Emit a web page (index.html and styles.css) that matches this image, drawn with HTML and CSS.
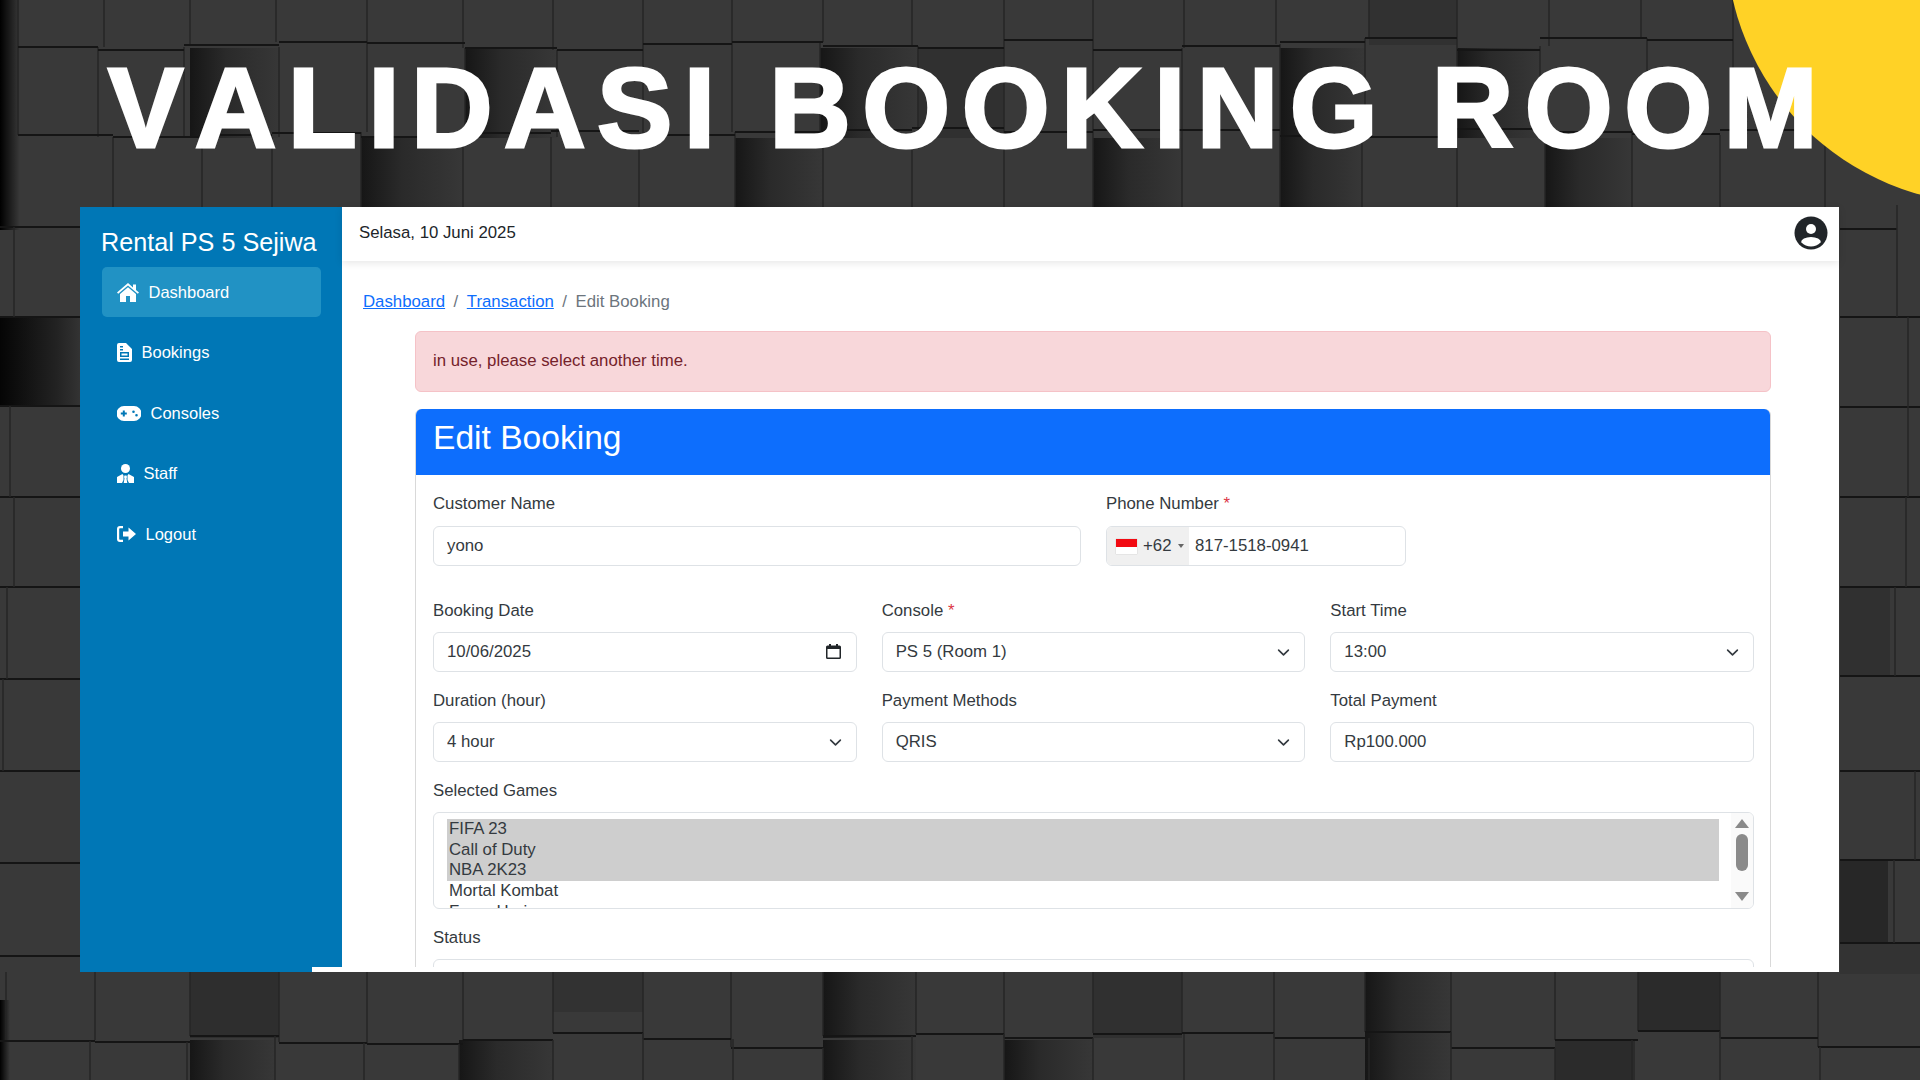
FILE: index.html
```html
<!DOCTYPE html>
<html lang="id">
<head>
  <meta charset="UTF-8">
  <meta name="viewport" content="width=device-width, initial-scale=1.0">
  <title>Validasi Booking Room</title>
  <link rel="stylesheet" href="styles.css">
</head>
<body>
  <!-- background cubes -->
  <svg class="cubes" viewBox="0 0 1920 1080" aria-hidden="true">
    <defs>
      <linearGradient id="shade">
        <stop offset="0" stop-color="#161616"/>
        <stop offset=".4" stop-color="#2a2a2a"/>
        <stop offset="1" stop-color="#373737"/>
      </linearGradient>
      <linearGradient id="edge">
        <stop offset="0" stop-color="#000"/>
        <stop offset="1" stop-color="#000" stop-opacity="0"/>
      </linearGradient>
      <linearGradient id="left-drop">
        <stop offset="0" stop-color="#050505"/>
        <stop offset=".7" stop-color="#222"/>
        <stop offset="1" stop-color="#333"/>
      </linearGradient>
    </defs>
    <rect width="1920" height="1080" fill="#393939"/>

    <!-- shadowed faces, top rows -->
    <rect x="190" y="48" width="90" height="90" fill="url(#shade)"/>
    <rect x="465" y="48" width="92" height="90" fill="url(#shade)"/>
    <rect x="820" y="48" width="98" height="90" fill="url(#shade)"/>
    <rect x="918" y="48" width="86" height="90" fill="#303030"/>
    <rect x="1280" y="48" width="85" height="90" fill="url(#shade)"/>
    <rect x="1457" y="48" width="83" height="90" fill="url(#shade)"/>
    <rect x="1369" y="0" width="88" height="45" fill="#313131"/>
    <rect x="361" y="138" width="102" height="70" fill="url(#shade)"/>
    <rect x="735" y="138" width="88" height="70" fill="url(#shade)"/>
    <rect x="1093" y="138" width="89" height="70" fill="url(#shade)"/>
    <rect x="1280" y="138" width="82" height="70" fill="url(#shade)"/>
    <rect x="1545" y="138" width="87" height="70" fill="url(#shade)"/>

    <!-- shadowed faces, side strips -->
    <rect x="0" y="317" width="80" height="90" fill="url(#left-drop)"/>
    <rect x="0" y="0" width="20" height="230" fill="url(#edge)"/>
    <rect x="0" y="1000" width="10" height="80" fill="url(#edge)"/>
    <rect x="1840" y="587" width="50" height="90" fill="#303030"/>
    <rect x="1840" y="860" width="48" height="84" fill="#272727"/>
    <rect x="1840" y="944" width="80" height="30" fill="#333"/>

    <!-- shadowed faces, bottom rows -->
    <rect x="190" y="972" width="89" height="66" fill="#2e2e2e"/>
    <rect x="553" y="972" width="90" height="40" fill="#323232"/>
    <rect x="823" y="972" width="93" height="66" fill="url(#shade)"/>
    <rect x="1093" y="972" width="89" height="66" fill="#303030"/>
    <rect x="1365" y="972" width="86" height="66" fill="url(#shade)"/>
    <rect x="1638" y="972" width="82" height="60" fill="#2b2b2b"/>
    <rect x="190" y="1040" width="85" height="40" fill="url(#shade)"/>
    <rect x="459" y="1040" width="94" height="40" fill="url(#shade)"/>
    <rect x="823" y="1040" width="93" height="40" fill="url(#shade)"/>
    <rect x="1004" y="1040" width="89" height="40" fill="url(#shade)"/>
    <rect x="1365" y="1032" width="86" height="48" fill="url(#shade)"/>
    <rect x="1555" y="1040" width="80" height="40" fill="#2b2b2b"/>

    <!-- seams between cubes, vertical ones are faint -->
    <path class="seam-v" d="M18 0V47M104 0V47M190 0V45M276 0V42M367 0V42M463 0V48M553 0V50M643 0V48M732 0V44M823 0V42M912 0V46M1004 0V40M1093 0V50M1184 0V48M1276 0V44M1369 0V38M1457 0V50M1549 0V46M1641 0V38M1733 0V40"/>
    <path class="seam-v" d="M18 47V135M98 47V137M184 47V137M279 47V137M367 42V132M465 48V137M557 50V137M643 48V135M732 44V132M820 42V132M918 46V137M1004 40V128M1093 50V137M1182 48V130M1280 44V133M1365 38V130M1457 50V137M1540 46V135M1647 38V128M1733 40V135"/>
    <path class="seam-v" d="M113 137V207M202 137V207M272 137V207M361 132V207M463 137V207M551 137V207M639 135V207M735 132V207M823 132V207M912 137V207M1004 128V207M1093 137V207M1182 130V207M1280 133V207M1362 130V207M1457 137V207M1545 135V207M1632 128V207M1720 135V207M1825 137V207"/>
    <path class="seam" d="M18 47H98M98 50H184M184 45H279M279 42H367M367 43H465M465 48H557M557 50H643M643 44H732M732 42H823M823 46H918M918 48H1004M1004 40H1093M1093 50H1182M1182 46H1280M1280 42H1365M1365 38H1457M1457 50H1540M1540 38H1647M1647 40H1733"/>
    <path class="seam" d="M18 135H113M113 137H202M202 135H272M272 133H361M361 137H463M463 133H551M551 131H639M639 135H735M735 132H823M823 130H912M912 128H1004M1004 132H1093M1093 130H1182M1182 130H1280M1280 136H1362M1362 137H1457M1457 129H1545M1545 132H1632M1632 134H1720M1720 130H1825"/>

    <path class="seam" d="M0 227H80M0 317H80M0 406H80M0 497H80M0 587H80M0 679H80M0 771H80M0 863H80M0 956H80"/>
    <path class="seam-v" d="M14 227V317M10 406V497M14 497V587M7 587V679M3 679V771"/>
    <path class="seam" d="M1840 229H1897M1840 317H1920M1840 407H1920M1840 497H1920M1840 587H1920M1840 676H1920M1840 771H1920M1840 860H1920M1840 943H1920"/>
    <path class="seam-v" d="M1897 205V317M1908 317V407M1908 407V497M1906 497V587M1895 587V676M1915 771V860M1894 860V943"/>

    <path class="seam-v" d="M6 972V1040M95 972V1040M190 972V1036M279 972V1042M367 972V1043M463 972V1040M553 972V1033M643 972V1039M731 972V1047M823 972V1036M916 972V1034M1004 972V1038M1093 972V1033M1182 972V1033M1274 972V1038M1365 972V1032M1451 972V1047M1555 972V1040M1638 972V1031M1720 972V1038M1818 972V1047"/>
    <path class="seam" d="M0 1041H95M95 1042H190M190 1036H279M279 1043H367M367 1044H463M463 1040H553M553 1033H643M643 1039H731M731 1048H823M823 1036H916M916 1034H1004M1004 1038H1093M1093 1034H1182M1182 1033H1274M1274 1038H1365M1365 1032H1451M1451 1048H1555M1555 1040H1638M1638 1031H1720M1720 1038H1818M1818 1047H1920"/>
    <path class="seam-v" d="M90 1041V1080M187 1042V1080M275 1036V1080M364 1043V1080M459 1044V1080M553 1040V1080M643 1033V1080M733 1039V1080M823 1048V1080M912 1036V1080M1004 1034V1080M1093 1038V1080M1184 1034V1080M1274 1033V1080M1369 1038V1080M1451 1032V1080M1555 1048V1080M1632 1040V1080M1720 1031V1080M1820 1047V1080"/>
  </svg>

  <div class="sun"></div>

  <header class="hero">
    <h1>VALIDASI BOOKING ROOM</h1>
  </header>

  <div class="window">
    <aside class="sidebar">
      <div class="brand">Rental PS 5 Sejiwa</div>
      <nav class="nav">
        <a class="nav-item active" href="#">
          <svg class="ico" width="22" height="19" viewBox="0 0 22 19"><path d="M11 0 0 9.400l1.200 1.400L11 2.500l9.800 8.300L22 9.400l-3-2.500V1.500h-3v2.900z"/><path d="M11 4.200 3 11v8h6v-6h4v6h6v-8z"/></svg>
          Dashboard
        </a>
        <a class="nav-item" href="#">
          <svg class="ico" width="15" height="19" viewBox="0 0 15 19"><path fill-rule="evenodd" d="M2 0h7l6 6v11a2 2 0 0 1-2 2H2a2 2 0 0 1-2-2V2a2 2 0 0 1 2-2zm1 3v1.500h3V3zm0 3v1.500h3V6zm0 3v5h9V9zm1.500 1.500h6v2h-6zM3 15.500V17h9v-1.500z"/></svg>
          Bookings
        </a>
        <a class="nav-item" href="#">
          <svg class="ico" width="24" height="15" viewBox="0 0 24 15"><path fill-rule="evenodd" d="M7 0h10a7.500 7.500 0 0 1 0 15H7A7.500 7.500 0 0 1 7 0zM5.800 4.500v2H3.800v2h2v2h2v-2h2v-2h-2v-2zM16.500 4.500a1.300 1.300 0 1 0 0 2.600 1.300 1.300 0 0 0 0-2.600zM19.500 7.900a1.300 1.300 0 1 0 0 2.600 1.300 1.300 0 0 0 0-2.600z"/></svg>
          Consoles
        </a>
        <a class="nav-item" href="#">
          <svg class="ico" width="17" height="19" viewBox="0 0 17 19"><circle cx="8.500" cy="4.500" r="4.500"/><path d="M5.500 10 0 13v6h5l1.500-3V11.500zM11.500 10 17 13v6h-5l-1.500-3V11.500zM7.500 11.500h2l.5 1.500-.5 1.500.8 4.500H6.700l.8-4.500L7 13z"/></svg>
          Staff
        </a>
        <a class="nav-item" href="#">
          <svg class="ico" width="19" height="16" viewBox="0 0 19 16"><path d="M6 0H3a3 3 0 0 0-3 3v10a3 3 0 0 0 3 3h3v-2.200H3a.8.8 0 0 1-.8-.8V3a.8.8 0 0 1 .8-.8h3z"/><path d="M11.500 1.500 19 8l-7.500 6.500V10.500H6v-5h5.500z"/></svg>
          Logout
        </a>
      </nav>
    </aside>

    <div class="main">
      <div class="topbar">
        <span>Selasa, 10 Juni 2025</span>
        <svg width="34" height="34" viewBox="0 0 34 34">
          <defs><clipPath id="avatar"><circle cx="17" cy="17" r="13.500"/></clipPath></defs>
          <circle cx="17" cy="17" r="16.500" fill="#212529"/>
          <circle cx="17" cy="13" r="5" fill="#fff"/>
          <ellipse cx="17" cy="26.500" rx="10" ry="5.500" fill="#fff" clip-path="url(#avatar)"/>
        </svg>
      </div>

      <div class="content">
        <ol class="crumbs">
          <li><a href="#">Dashboard</a></li>
          <li class="sep">/</li>
          <li><a href="#">Transaction</a></li>
          <li class="sep">/</li>
          <li class="current">Edit Booking</li>
        </ol>

        <div class="page">
          <div class="alert">in use, please select another time.</div>

          <section class="card">
            <h2 class="card-title">Edit Booking</h2>
            <form class="card-body">
              <div class="row row-2">
                <div>
                  <label class="label">Customer Name</label>
                  <input class="field" type="text" value="yono">
                </div>
                <div>
                  <label class="label">Phone Number <span class="req">*</span></label>
                  <div class="field phone">
                    <div class="dial">
                      <span class="flag"></span>
                      <span>+62</span>
                      <span class="caret"></span>
                    </div>
                    <span class="phone-num">817-1518-0941</span>
                  </div>
                </div>
              </div>

              <div class="row row-3">
                <div>
                  <label class="label">Booking Date</label>
                  <div class="date">
                    <input class="field" type="text" value="10/06/2025">
                    <svg class="cal" width="15" height="15" viewBox="0 0 15 15"><path fill-rule="evenodd" d="M3 0h2v1.500h5V0h2v1.500h1.500A1.500 1.500 0 0 1 15 3v10.500a1.500 1.500 0 0 1-1.500 1.500h-12A1.500 1.500 0 0 1 0 13.500V3a1.500 1.500 0 0 1 1.500-1.500H3zM1.500 5v8.500h12V5z"/></svg>
                  </div>
                </div>
                <div>
                  <label class="label">Console <span class="req">*</span></label>
                  <select class="field pick"><option>PS 5 (Room 1)</option></select>
                </div>
                <div>
                  <label class="label">Start Time</label>
                  <select class="field pick"><option>13:00</option></select>
                </div>
              </div>

              <div class="row row-3">
                <div>
                  <label class="label">Duration (hour)</label>
                  <select class="field pick"><option>4 hour</option></select>
                </div>
                <div>
                  <label class="label">Payment Methods</label>
                  <select class="field pick"><option>QRIS</option></select>
                </div>
                <div>
                  <label class="label">Total Payment</label>
                  <input class="field" type="text" value="Rp100.000">
                </div>
              </div>

              <div class="row">
                <label class="label">Selected Games</label>
                <div class="games">
                  <div class="game-list">
                    <div class="game on">FIFA 23</div>
                    <div class="game on">Call of Duty</div>
                    <div class="game on">NBA 2K23</div>
                    <div class="game">Mortal Kombat</div>
                    <div class="game">Forza Horizon</div>
                  </div>
                  <div class="scrollbar">
                    <span class="arrow up"></span>
                    <span class="thumb"></span>
                    <span class="arrow down"></span>
                  </div>
                </div>
              </div>

              <div class="row">
                <label class="label">Status</label>
                <div class="field status"></div>
              </div>
            </form>
          </section>
        </div>
      </div>
      <div class="scroll-stub"></div>
    </div>
  </div>
</body>
</html>
```

FILE: styles.css
```css
* {
  margin: 0;
  padding: 0;
  box-sizing: border-box;
}

html, body {
  width: 1920px;
  height: 1080px;
  overflow: hidden;
}

body {
  position: relative;
  font-family: "Liberation Sans", Arial, sans-serif;
  font-size: 16.8px;
  color: #212529;
  background-color: #333;
}

.cubes {
  position: absolute;
  top: 0;
  left: 0;
  width: 1920px;
  height: 1080px;
}

.seam {
  fill: none;
  stroke: #151515;
  stroke-width: 2;
}

.seam-v {
  fill: none;
  stroke: #262626;
  stroke-width: 1.500;
}

.sun {
  position: absolute;
  top: -324px;
  left: 1726px;
  width: 528px;
  height: 528px;
  border-radius: 50%;
  background-color: #ffd226;
}

/* title */
.hero {
  position: relative;
  height: 207px;
  padding: 43px 0 0 108px;
}

.hero h1 {
  font-size: 113px;
  line-height: 130px;
  font-weight: 700;
  font-kerning: none;
  letter-spacing: 11.400px;
  color: #fff;
  -webkit-text-stroke: 3px #fff;
  white-space: nowrap;
}

/* window */
.window {
  position: relative;
  display: flex;
  width: 1759px;
  height: 765px;
  margin-left: 80px;
  background-color: #fff;
}

.sidebar {
  width: 262px;
  flex-shrink: 0;
  padding: 20px 21px 0 21.500px;
  background-color: #0077b6;
  color: #fff;
}

.brand {
  font-size: 25.200px;
  line-height: 30px;
  margin: 0 0 10px -.500px;
  white-space: nowrap;
}

.nav {
  display: flex;
  flex-direction: column;
  gap: 10.600px;
}

.nav-item {
  display: flex;
  align-items: center;
  gap: 10px;
  height: 50px;
  padding-left: 15px;
  border-radius: 5px;
  color: #fff;
  font-size: 16.500px;
  text-decoration: none;
}

.nav-item.active {
  background-color: #2192c4;
}

.ico {
  flex-shrink: 0;
  fill: #fff;
}

.main {
  position: relative;
  flex: 1;
  min-width: 0;
  display: flex;
  flex-direction: column;
}

.topbar {
  position: relative;
  display: flex;
  justify-content: space-between;
  align-items: center;
  height: 54px;
  padding: 0 11px 2px 17px;
  flex-shrink: 0;
  background-color: #fff;
  box-shadow: 0 2px 8px rgba(0, 0, 0, .1);
}

.content {
  height: 706px;
  overflow: hidden;
  padding-top: 29px;
}

.crumbs {
  display: flex;
  gap: 8.500px;
  padding-left: 21px;
  list-style: none;
  line-height: 24px;
}

.crumbs a {
  color: #0d6efd;
}

.crumbs .sep,
.crumbs .current {
  color: #6c757d;
}

.page {
  width: 1356px;
  margin: 17px 0 0 73px;
}

.alert {
  height: 61px;
  padding-left: 17px;
  line-height: 58px;
  border: 1px solid #f5c2c7;
  border-radius: 6px;
  background-color: #f8d7da;
  color: #74222a;
}

.card {
  margin-top: 17px;
  border: 1px solid #d9d9d9;
  border-radius: 6px 6px 0 0;
}

.card-title {
  height: 66px;
  padding-left: 17px;
  margin-top: -1px;
  line-height: 57px;
  font-size: 33.600px;
  font-weight: 400;
  color: #fff;
  background-color: #0d6efd;
  border-radius: 6px 6px 0 0;
}

.card-body {
  padding: 16px 16px 0 17px;
}

.row {
  margin-bottom: 16px;
}

.row-2 {
  display: grid;
  grid-template-columns: 1fr 1fr;
  column-gap: 25px;
  margin-bottom: 32px;
}

.row-2 .label {
  margin-bottom: 11px;
}

.row-3 {
  display: grid;
  grid-template-columns: repeat(3, 1fr);
  column-gap: 25px;
}

.label {
  display: block;
  height: 24px;
  margin-bottom: 10px;
  padding-top: 1px;
  line-height: 24px;
  color: #343a40;
}

.req {
  color: #dc3545;
}

.field {
  display: block;
  width: 100%;
  height: 40px;
  padding: 0 13px;
  font-family: inherit;
  font-size: 16.800px;
  color: #343a40;
  background-color: #fff;
  border: 1px solid #dee2e6;
  border-radius: 6px;
  outline: none;
}

.pick {
  appearance: none;
  padding-bottom: 1px;
  background-image: url("data:image/svg+xml,%3csvg xmlns='http://www.w3.org/2000/svg' viewBox='0 0 16 16'%3e%3cpath fill='none' stroke='%23343a40' stroke-linecap='round' stroke-linejoin='round' stroke-width='2' d='m2 5 6 6 6-6'/%3e%3c/svg%3e");
  background-repeat: no-repeat;
  background-position: right 14px center;
  background-size: 13px 13px;
}

.date {
  position: relative;
}

.cal {
  position: absolute;
  top: 12px;
  right: 16px;
  fill: #212529;
}

.phone {
  display: flex;
  align-items: center;
  width: 300px;
  padding: 0;
  overflow: hidden;
}

.dial {
  display: flex;
  align-items: center;
  width: 82px;
  height: 100%;
  padding-left: 9px;
  background-color: #f0f0f0;
}

.flag {
  width: 21px;
  height: 15px;
  margin-right: 6px;
  background: linear-gradient(#f20a12 50%, #fff 50%);
  box-shadow: 0 0 1px rgba(0, 0, 0, .25);
}

.caret {
  width: 0;
  height: 0;
  margin-left: 7px;
  border: 3px solid transparent;
  border-top: 4px solid #666;
  border-bottom: 0;
}

.phone-num {
  padding-left: 6px;
}

/* game list */
.games {
  position: relative;
  height: 97px;
  overflow: hidden;
  padding: 6px 34px 0 13px;
  border: 1px solid #dee2e6;
  border-radius: 6px;
}

.game {
  height: 20.700px;
  padding-left: 2px;
  line-height: 20.700px;
  color: #343a40;
}

.game.on {
  background-color: #cecece;
}

.scrollbar {
  position: absolute;
  top: 0;
  right: 0;
  display: flex;
  flex-direction: column;
  align-items: center;
  width: 22px;
  height: 100%;
  background-color: #fafafa;
}

.thumb {
  width: 12px;
  height: 37px;
  margin-top: 6px;
  border-radius: 6px;
  background-color: #8a8a8a;
}

.arrow {
  width: 0;
  height: 0;
  border-left: 7px solid transparent;
  border-right: 7px solid transparent;
}

.arrow.up {
  margin-top: 6px;
  border-bottom: 9px solid #8a8a8a;
}

.arrow.down {
  margin-top: 21px;
  border-top: 9px solid #8a8a8a;
}

.status {
  height: 40px;
}

.scroll-stub {
  position: absolute;
  left: -30px;
  bottom: 0;
  width: 30px;
  height: 5px;
  background-color: #fff;
}
```
